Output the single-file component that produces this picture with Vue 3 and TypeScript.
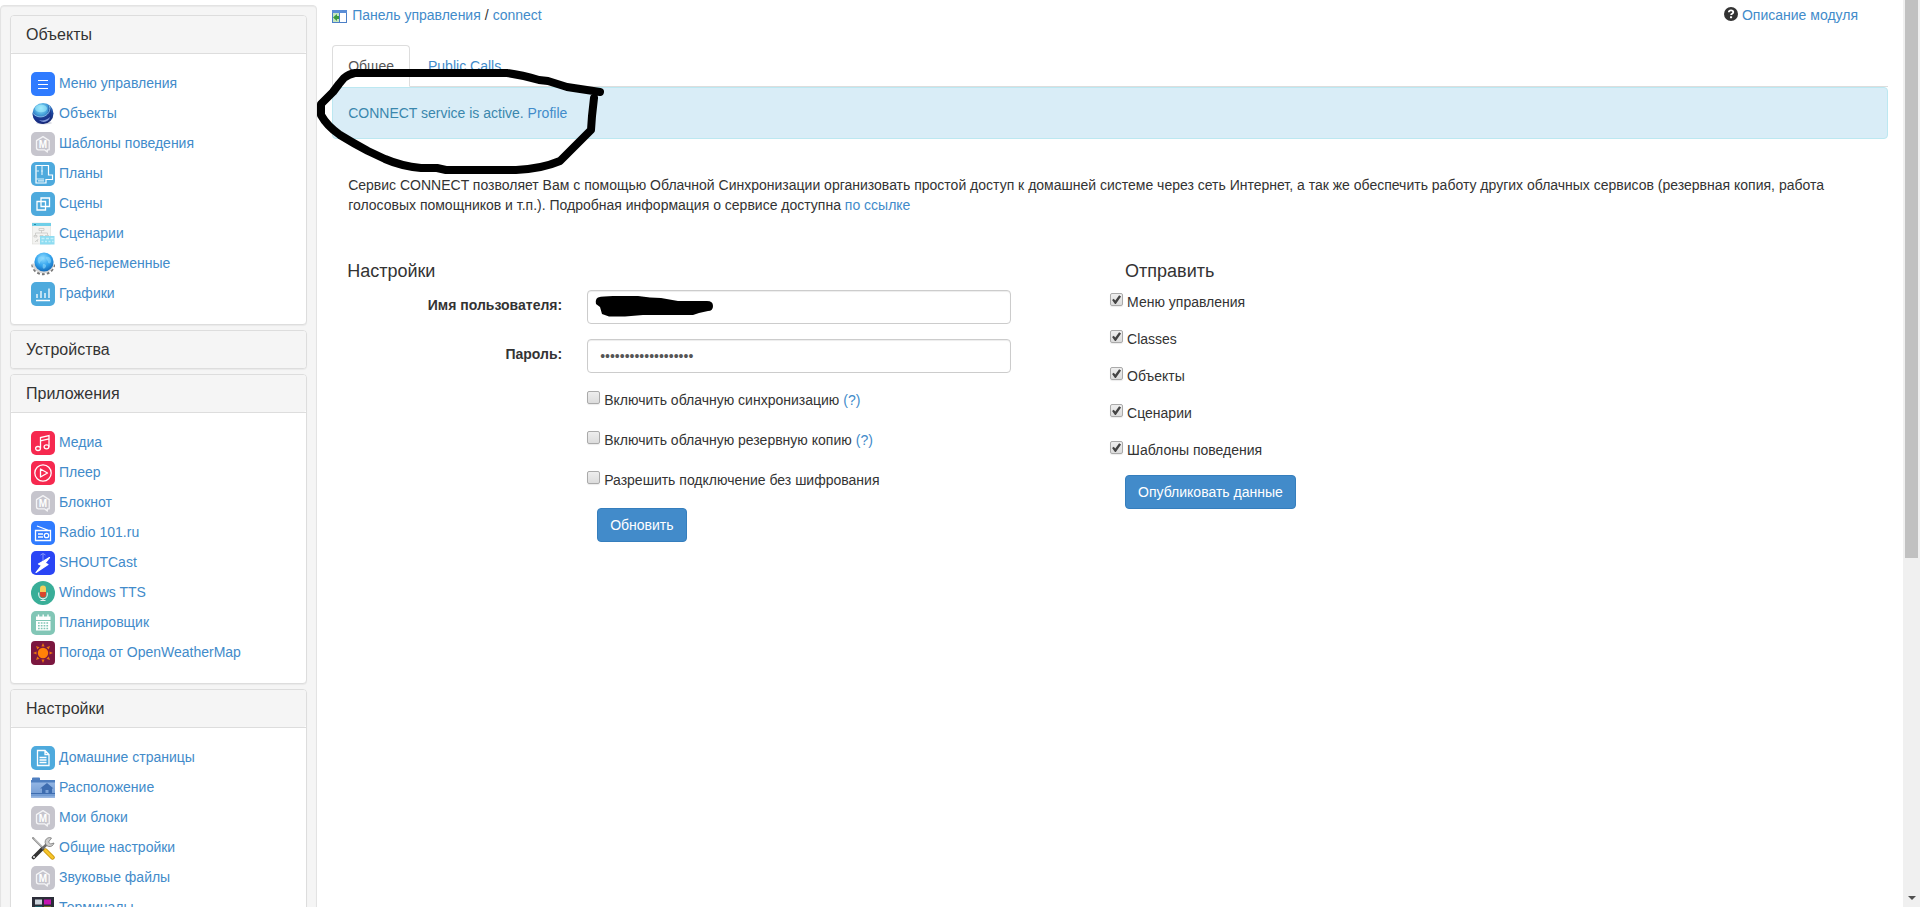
<script setup lang="ts">
import { ref } from 'vue'

interface MenuItem {
  label: string
  icon: string
}

interface MenuGroup {
  title: string
  items: MenuItem[]
}

interface Option {
  id: string
  label: string
  checked: boolean
  help?: boolean
}

const groups: MenuGroup[] = [
  {
    title: 'Объекты',
    items: [
      { label: 'Меню управления', icon: 'menu' },
      { label: 'Объекты', icon: 'sphere' },
      { label: 'Шаблоны поведения', icon: 'module' },
      { label: 'Планы', icon: 'plan' },
      { label: 'Сцены', icon: 'scenes' },
      { label: 'Сценарии', icon: 'script' },
      { label: 'Веб-переменные', icon: 'globe' },
      { label: 'Графики', icon: 'chart' },
    ],
  },
  { title: 'Устройства', items: [] },
  {
    title: 'Приложения',
    items: [
      { label: 'Медиа', icon: 'music' },
      { label: 'Плеер', icon: 'player' },
      { label: 'Блокнот', icon: 'module' },
      { label: 'Radio 101.ru', icon: 'radio' },
      { label: 'SHOUTCast', icon: 'bolt' },
      { label: 'Windows TTS', icon: 'mic' },
      { label: 'Планировщик', icon: 'calendar' },
      { label: 'Погода от OpenWeatherMap', icon: 'sun' },
    ],
  },
  {
    title: 'Настройки',
    items: [
      { label: 'Домашние страницы', icon: 'page' },
      { label: 'Расположение', icon: 'folder' },
      { label: 'Мои блоки', icon: 'module' },
      { label: 'Общие настройки', icon: 'tools' },
      { label: 'Звуковые файлы', icon: 'module' },
      { label: 'Терминалы', icon: 'terminal' },
    ],
  },
]

const username = ref('')
const password = ref('connect-password-01')

const settings = ref<Option[]>([
  { id: 'sync', label: 'Включить облачную синхронизацию', checked: false, help: true },
  { id: 'backup', label: 'Включить облачную резервную копию', checked: false, help: true },
  { id: 'plain', label: 'Разрешить подключение без шифрования', checked: false },
])

const publish = ref<Option[]>([
  { id: 'send-menu', label: 'Меню управления', checked: true },
  { id: 'send-classes', label: 'Classes', checked: true },
  { id: 'send-objects', label: 'Объекты', checked: true },
  { id: 'send-scripts', label: 'Сценарии', checked: true },
  { id: 'send-patterns', label: 'Шаблоны поведения', checked: true },
])
</script>

<template>
  <div class="app">
    <svg class="defs" aria-hidden="true">
      <defs>
        <radialGradient id="g-sphere" cx="0.4" cy="0.25" r="0.75">
          <stop offset="0" stop-color="#9be8fb" />
          <stop offset="0.4" stop-color="#4aa5dc" />
          <stop offset="0.75" stop-color="#1f4fa8" />
          <stop offset="1" stop-color="#15246b" />
        </radialGradient>
        <radialGradient id="g-globe" cx="0.45" cy="0.3" r="0.7">
          <stop offset="0" stop-color="#8fdcff" />
          <stop offset="0.55" stop-color="#35a5ee" />
          <stop offset="1" stop-color="#1169b8" />
        </radialGradient>
        <linearGradient id="g-folder" x1="0" y1="0" x2="0" y2="1">
          <stop offset="0" stop-color="#92b5e4" />
          <stop offset="1" stop-color="#6d97d0" />
        </linearGradient>
      </defs>
      <symbol id="i-menu" viewBox="0 0 24 24">
        <rect width="24" height="24" rx="5" fill="#2f7bff" />
        <path d="M7 8.500h10M7 12.500h10M7 16.500h10" stroke="#fff" stroke-width="1.200" />
      </symbol>
      <symbol id="i-sphere" viewBox="0 0 24 24">
        <ellipse cx="13" cy="21" rx="8" ry="1.500" fill="#d5d8e2" />
        <circle cx="12" cy="11.500" r="10.500" fill="url(#g-sphere)" />
        <path d="M1.500 11c3 3 7 5 11 3 4-1 6-5 5-10 3 3 4 8 2 12-3 6-10 7-14 4-2-2-4-5-4-9z" fill="#182b83" opacity="0.750" />
        <ellipse cx="10" cy="6.500" rx="6" ry="3.800" fill="#a8f0ff" opacity="0.550" />
        <path d="M1.500 11c4 5 11 5 15 1 2-2 3-5 2-8" fill="none" stroke="#8fcdf3" stroke-width="0.900" />
        <path d="M8 18c4 1 8 0 11-3-1 4-6 7-11 3z" fill="#9fb6ee" opacity="0.800" />
      </symbol>
      <symbol id="i-module" viewBox="0 0 24 24">
        <rect width="24" height="24" rx="5" fill="#c6c5cd" />
        <path d="M16.300 17.800h1.900V8.600L12 4.600 5.500 8.600v7.200q0 2 2 2h6l2.800 2.200z" fill="none" stroke="#f4f4f6" stroke-width="1.300" stroke-linejoin="round" />
        <text x="12" y="15.500" text-anchor="middle" font-family="Liberation Sans, Arial, sans-serif" font-size="10" font-weight="700" fill="#fff">M</text>
      </symbol>
      <symbol id="i-plan" viewBox="0 0 24 24">
        <rect width="24" height="24" rx="5" fill="#4eaadd" />
        <path d="M5 3.500h12.500V13h4v4.500H15V21H5z" fill="none" stroke="#fff" stroke-width="1.200" />
        <path d="M5 9h3M11 3.500V13M10 9h2M5 17h8M7 18.800h6" fill="none" stroke="#d8effa" stroke-width="1.200" />
      </symbol>
      <symbol id="i-scenes" viewBox="0 0 24 24">
        <rect width="24" height="24" rx="5" fill="#4eaadd" />
        <path d="M10 6h8.500v8.500H10zM6 9.500h8.500V18H6z" fill="none" stroke="#fff" stroke-width="1.300" />
      </symbol>
      <symbol id="i-script" viewBox="0 0 24 24">
        <rect x="1.500" y="1" width="18" height="21" fill="#f3f3f1" stroke="#dcdcd9" stroke-width="0.600" />
        <rect x="1" y="1" width="19" height="3" fill="#6fcfe8" />
        <path d="M3 2.500h2" stroke="#2789a5" stroke-width="1.200" />
        <path d="M8 6.500h5v2H8zM10.500 8.500V11M4.500 11h12M4.500 11v2M16.500 11v2M3 13.500h3v1.500H3zM9 13.500h3v1.500H9zM14 13.500h4M4 20l2-2M7 17l-1 3" fill="none" stroke="#c2c2bf" stroke-width="0.700" />
        <rect x="9" y="14" width="14.500" height="8.500" fill="#8edcf1" />
        <path d="M10.500 16.500h3M15 16.500h3M19.500 16.500h3M10.500 19.500h2M14 19.500h2M17.500 19.500h2M21 19.500h1.500" stroke="#c5effa" stroke-width="1.500" />
      </symbol>
      <symbol id="i-globe" viewBox="0 0 24 24">
        <path d="M2 12.500a10.200 9 0 0 0 20.400 0" fill="none" stroke="#777" stroke-width="3.400" stroke-dasharray="2.600 2" />
        <path d="M2.500 11.500a9.700 8.500 0 0 0 19.400 0" fill="none" stroke="#d7d7d7" stroke-width="2.500" />
        <circle cx="13" cy="10" r="9.600" fill="url(#g-globe)" />
        <path d="M7 6c3-3 6-1 5 1s-3 2-3 4-3-1-2-5zM15 5c3-1 5 1 5 4s-3 3-3 1-3-3-2-5zM12 12c3 0 4 2 2 4s-3-1-2-4z" fill="#8fd8fc" opacity="0.600" />
      </symbol>
      <symbol id="i-chart" viewBox="0 0 24 24">
        <rect width="24" height="24" rx="5" fill="#4eaadd" />
        <path d="M6 12v4M10 9v7M14 11v5M18 6.500V16M5 18.500h14" stroke="#fff" stroke-width="1.300" />
      </symbol>
      <symbol id="i-music" viewBox="0 0 24 24">
        <rect width="24" height="24" rx="5" fill="#f6294f" />
        <g fill="none" stroke="#fff" stroke-width="1.300">
          <ellipse cx="7" cy="17.500" rx="2.400" ry="2" />
          <ellipse cx="15.500" cy="15.800" rx="2.400" ry="2" />
          <path d="M9.500 17.500V6.500l8.500-2v11.300M9.500 9.800l8.500-2" />
        </g>
      </symbol>
      <symbol id="i-player" viewBox="0 0 24 24">
        <rect width="24" height="24" rx="5" fill="#f6294f" />
        <circle cx="12" cy="12" r="8.200" fill="none" stroke="#fff" stroke-width="1.300" />
        <path d="M9.500 8v8l7-4z" fill="none" stroke="#fff" stroke-width="1.300" stroke-linejoin="round" />
      </symbol>
      <symbol id="i-radio" viewBox="0 0 24 24">
        <rect width="24" height="24" rx="5" fill="#2f7bff" />
        <path d="M4.500 9.500h15v10h-15zM6 5l12 4.500M7 13h5M7 16h5" fill="none" stroke="#fff" stroke-width="1.300" />
        <circle cx="15.500" cy="14.500" r="2.200" fill="none" stroke="#fff" stroke-width="1.300" />
      </symbol>
      <symbol id="i-bolt" viewBox="0 0 24 24">
        <rect width="24" height="24" rx="5" fill="#2a45f5" />
        <path d="M18.500 6.500L7.500 13l3 1.500-5.500 7 12-8-3-1.500z" fill="#fff" stroke="#fff" stroke-width="1.200" stroke-linejoin="round" />
        <path d="M12 3v7M9.500 4q2.500-3 5 0" fill="none" stroke="#8f9ffb" stroke-width="0.900" />
      </symbol>
      <symbol id="i-mic" viewBox="0 0 24 24">
        <circle cx="12" cy="12" r="12" fill="#39ae98" />
        <path d="M9 11V7.500a3 3 0 0 1 6 0V11z" fill="#f4d05c" />
        <path d="M9 11h6v2.500a3 3 0 0 1-6 0z" fill="#d9462d" />
        <path d="M7.700 11.500v2a4.300 4.300 0 0 0 8.600 0v-2M12 17.500v2.500M9.500 19.500h5" fill="none" stroke="#e8efed" stroke-width="1.100" />
      </symbol>
      <symbol id="i-calendar" viewBox="0 0 24 24">
        <rect width="24" height="24" rx="5" fill="#82c6b6" />
        <path d="M5 5.500h14.500V9H5zM5 10h14.500v9.500H5z" fill="#fff" />
        <path d="M7.500 3.500v3M12.200 3.500v3M17 3.500v3" stroke="#fff" stroke-width="1.400" />
        <path d="M7 12h11M7 14.800h11M7 17.500h11" stroke="#82c6b6" stroke-width="1.600" stroke-dasharray="1.700 1.100" />
      </symbol>
      <symbol id="i-sun" viewBox="0 0 24 24">
        <rect width="24" height="24" rx="4" fill="#7b173f" />
        <circle cx="12" cy="12" r="5.200" fill="#ff8208" />
        <path d="M12 2l1.600 3.500h-3.200zM12 22l1.600-3.500h-3.200zM2 12l3.500-1.600v3.200zM22 12l-3.500-1.600v3.200zM5 5l3.600 1.300-2.300 2.300zM19 5l-3.600 1.300 2.300 2.300zM5 19l3.600-1.300-2.300-2.300zM19 19l-3.600-1.300 2.300-2.300z" fill="#e8740f" />
      </symbol>
      <symbol id="i-page" viewBox="0 0 24 24">
        <rect width="24" height="24" rx="5" fill="#4eaadd" />
        <path d="M6.500 4.500h7.500l4 4V19.500H6.500zM14 4.500v4h4M8.500 11.500h7M8.500 14h7M8.500 16.500h7" fill="none" stroke="#fff" stroke-width="1.300" />
      </symbol>
      <symbol id="i-folder" viewBox="0 0 24 24">
        <path d="M1 2.500q0-1 1-1h6q1 0 1 1V4H24v17.500H0V4h1z" fill="#4f7fc0" />
        <path d="M0 6.500h24v15H0z" fill="url(#g-folder)" />
        <path d="M9 12.500l7-5.500 6.500 5.500h-1.500V17h-3.500v-3h-3v3H11v-4.500z" fill="#3e6db0" />
        <path d="M0 17.500h24" stroke="#3e6db0" stroke-width="1" />
        <path d="M0 21h24" stroke="#a9c4ea" stroke-width="1" />
      </symbol>
      <symbol id="i-tools" viewBox="0 0 24 24">
        <path d="M2 2l13 13" stroke="#8d8d8d" stroke-width="2" stroke-linecap="round" />
        <path d="M3 2.500l11 11" stroke="#e5e5e5" stroke-width="0.900" />
        <path d="M14.500 14.500l7 7" stroke="#c28b00" stroke-width="4.400" stroke-linecap="round" />
        <path d="M14.500 14.500l7 7" stroke="#f6c52b" stroke-width="2.800" stroke-linecap="round" />
        <path d="M2.500 21.500L11 13" stroke="#333" stroke-width="3.600" stroke-linecap="round" />
        <path d="M11 13l5-5" stroke="#6d6d6d" stroke-width="2.600" />
        <path d="M20.500 2a4.500 4.500 0 1 0 2.500 5l-3.500 1-2-2z" fill="#cfcfcf" stroke="#777" stroke-width="0.800" />
        <circle cx="3" cy="21" r="1" fill="#eee" />
      </symbol>
      <symbol id="i-terminal" viewBox="0 0 24 24">
        <rect x="1" y="1" width="22" height="22" fill="#2b2d38" />
        <rect x="4" y="3.500" width="7" height="5" fill="#cdd4dc" />
        <rect x="13" y="3.500" width="7" height="5" fill="#c413b0" />
        <rect x="4" y="10.500" width="7" height="5" fill="#0d8f94" />
        <rect x="13" y="10.500" width="7" height="5" fill="#b9a417" />
      </symbol>
    </svg>

    <div class="viewport">
      <aside class="sidebar">
        <section v-for="group in groups" :key="group.title" class="panel">
          <h2 class="panel-title">{{ group.title }}</h2>
          <ul v-if="group.items.length" class="panel-body">
            <li v-for="item in group.items" :key="item.label">
              <a href="#" class="menu-link">
                <svg class="menu-icon" aria-hidden="true"><use :href="'#i-' + item.icon" /></svg>
                <span>{{ item.label }}</span>
              </a>
            </li>
          </ul>
        </section>
      </aside>

      <main class="main">
        <header class="topline">
          <nav class="crumbs" aria-label="Навигация">
            <svg class="crumb-icon" viewBox="0 0 16 16" aria-hidden="true">
              <rect x="0.500" y="1.500" width="14" height="12" fill="#fff" stroke="#4c7fc6" />
              <path d="M0 1h15v3H0z" fill="#5b8ed6" />
              <path d="M1 4h6v9H1z" fill="#c6e6c0" />
              <path d="M7.500 4v9" stroke="#4c7fc6" />
              <path d="M1 8.500L5 5v2h2v3H5v2z" fill="#3b9b3e" />
            </svg>
            <a href="#">Панель управления</a>
            <span>/</span>
            <a href="#">connect</a>
          </nav>
          <div class="about">
            <svg class="about-icon" viewBox="0 0 14 14" aria-hidden="true">
              <circle cx="7" cy="7" r="7" fill="#333" />
              <path d="M4.800 5.300q0-2 2.200-2t2.300 1.800q0 1.200-1.300 1.700-.9.400-.9 1.300" fill="none" stroke="#fff" stroke-width="1.800" />
              <path d="M6 9.300h2.100v1.900H6z" fill="#fff" />
            </svg>
            <a href="#">Описание модуля</a>
          </div>
        </header>

        <nav class="tabs" aria-label="Разделы модуля">
          <a href="#" class="tab active">Общее</a>
          <a href="#" class="tab">Public Calls</a>
        </nav>

        <div class="alert">CONNECT service is active. <a href="#">Profile</a></div>

        <p class="intro">
          Сервис CONNECT позволяет Вам с помощью Облачной Синхронизации организовать простой доступ к домашней
          системе через сеть Интернет, а так же обеспечить работу других облачных сервисов (резервная копия, работа
          голосовых помощников и т.п.). Подробная информация о сервисе доступна <a href="#">по ссылке</a>
        </p>

        <div class="columns">
          <form class="column" @submit.prevent>
            <h3 class="heading">Настройки</h3>
            <div class="fields">
              <label class="field-label" for="username">Имя пользователя:</label>
              <div class="field">
                <input id="username" v-model="username" class="control" type="text" />
                <svg class="redaction" viewBox="0 0 119 21" aria-hidden="true">
                  <path d="M3 1.500Q8 0 18 0H43L55 1.500 66 2 83 5H112Q118 5 118 10T113 15L104 17 98 19H78L48 19 30 20.500H14L7 18 5 11 1 8Q0 3 3 1.500z" fill="#000" />
                </svg>
              </div>
              <label class="field-label" for="password">Пароль:</label>
              <div class="field">
                <input id="password" v-model="password" class="control" type="password" autocomplete="off" />
              </div>
              <div class="options">
                <div class="option-list">
                  <div v-for="option in settings" :key="option.id" class="option">
                    <input :id="option.id" v-model="option.checked" class="check" type="checkbox" />
                    <label :for="option.id">{{ option.label }}</label>
                    <a v-if="option.help" href="#">(?)</a>
                  </div>
                </div>
                <button class="button update" type="submit">Обновить</button>
              </div>
            </div>
          </form>

          <form class="column" @submit.prevent>
            <h3 class="heading">Отправить</h3>
            <div class="publish">
              <div v-for="option in publish" :key="option.id" class="option">
                <input :id="option.id" v-model="option.checked" class="check" type="checkbox" />
                <label :for="option.id">{{ option.label }}</label>
              </div>
            </div>
            <button class="button send" type="submit">Опубликовать данные</button>
          </form>
        </div>

        <svg class="marker" viewBox="0 0 288 110" aria-hidden="true">
          <path
            d="M283 26L250 21 231 15 222 14Q205 9 190 7H38Q32 8 27 12L22 18 16 26 4 38V49Q10 60 23 69 36 77 51 85L68 93Q84 100 104 102H120L129 104H199Q224 103 243 95L250 88 258 80 274 64 275 50 277 32"
            fill="none"
            stroke="#000"
            stroke-width="8"
            stroke-linecap="round"
            stroke-linejoin="round"
          />
        </svg>
      </main>
    </div>

    <div class="scrollbar" aria-hidden="true">
      <div class="thumb"></div>
      <svg class="arrow" viewBox="0 0 8 4"><path d="M0 0h8L4 4z" fill="#505050" /></svg>
    </div>
  </div>
</template>

<style>
html,
body {
  height: 100%;
  overflow: hidden;
  background: #fff;
}
</style>

<style scoped>
.app {
  display: flex;
  height: 100vh;
  color: #333;
  font-family: "Liberation Sans", Arial, Helvetica, sans-serif;
  font-size: 14px;
  line-height: 20px;
}

.app *,
.app *::before {
  box-sizing: border-box;
}

.defs {
  position: absolute;
  width: 0;
  height: 0;
}

a {
  color: #428bca;
  text-decoration: none;
}

a:hover {
  text-decoration: underline;
}

.viewport {
  flex: 1;
  min-width: 0;
  display: flex;
  align-items: flex-start;
  padding-top: 5px;
  overflow-y: auto;
  scrollbar-width: none;
}

.sidebar {
  flex: none;
  width: calc(100% / 6);
  display: flex;
  flex-direction: column;
  gap: 5px;
  padding: 9px;
  border: 1px solid #e3e3e3;
  border-radius: 4px;
  background: #f5f5f5;
  box-shadow: inset 0 1px 1px rgba(0, 0, 0, 0.05);
}

.panel {
  border: 1px solid #ddd;
  border-radius: 4px;
  background: #fff;
  box-shadow: 0 1px 1px rgba(0, 0, 0, 0.05);
}

.panel-title {
  margin: 0;
  padding: 10px 15px;
  border-radius: 3px;
  background: #f5f5f5;
  font-size: 16px;
  font-weight: 400;
  line-height: 17px;
}

.panel-body {
  margin: 0;
  padding: 15px 20px;
  border-top: 1px solid #ddd;
  list-style: none;
}

.menu-link {
  display: flex;
  align-items: center;
  gap: 4px;
  height: 30px;
}

.menu-link span {
  padding-bottom: 2px;
}

.menu-icon {
  flex: none;
  width: 24px;
  height: 24px;
}

.main {
  position: relative;
  flex: 1;
  min-width: 0;
  padding: 0 15px;
}

.topline {
  display: flex;
  justify-content: space-between;
  margin-bottom: 20px;
  padding-right: 30px;
}

.crumbs,
.about {
  display: flex;
  gap: 4px;
}

.crumb-icon {
  width: 16px;
  height: 16px;
  margin-top: 4px;
}

.about-icon {
  width: 14px;
  height: 14px;
  margin-top: 2px;
}

.tabs {
  display: flex;
  gap: 2px;
  border-bottom: 1px solid #ddd;
}

.tab {
  margin-bottom: -1px;
  padding: 10px 15px;
  border: 1px solid transparent;
  border-radius: 4px 4px 0 0;
}

.tab.active {
  border-color: #ddd #ddd #fff;
  background: #fff;
  color: #555;
}

.alert {
  padding: 15px;
  border: 1px solid #bce8f1;
  border-radius: 4px;
  background: #d9edf7;
  color: #3a87ad;
}

.intro {
  margin: 36px 0 46px;
  padding: 0 16px;
}

.columns {
  display: grid;
  grid-template-columns: 1fr 1fr;
}

.heading {
  margin: 0;
  padding-left: 15px;
  font-size: 18px;
  font-weight: 500;
  line-height: 20px;
}

.fields {
  display: grid;
  grid-template-columns: 230px 1fr;
  column-gap: 25px;
  row-gap: 15px;
  margin-top: 9px;
  padding-right: 99px;
}

.field-label {
  padding-top: 5px;
  font-weight: 700;
  text-align: right;
}

.field {
  position: relative;
}

.control {
  display: block;
  width: 100%;
  height: 34px;
  padding: 6px 12px;
  border: 1px solid #ccc;
  border-radius: 4px;
  background: #fff;
  box-shadow: inset 0 1px 1px rgba(0, 0, 0, 0.075);
  color: #555;
  font: inherit;
}

.redaction {
  position: absolute;
  top: 6px;
  left: 8px;
  width: 119px;
  height: 21px;
  pointer-events: none;
}

.options {
  grid-column: 2;
  padding-top: 2px;
}

.option-list {
  display: flex;
  flex-direction: column;
  gap: 20px;
  margin-bottom: 18px;
}

.option {
  display: flex;
  gap: 4px;
}

.check {
  position: relative;
  flex: none;
  width: 13px;
  height: 13px;
  margin: 1px 0 0;
  border: 1px solid #aaa;
  border-radius: 2px;
  background: linear-gradient(#eee, #dcdcdc);
  box-shadow: 0 1px 1px rgba(0, 0, 0, 0.08);
  appearance: none;
}

.check:checked::before {
  content: "";
  position: absolute;
  inset: 1px;
  background: #444;
  clip-path: polygon(0 55%, 18% 42%, 36% 62%, 78% 4%, 100% 16%, 42% 100%, 32% 100%);
}

.button {
  display: block;
  height: 34px;
  padding: 6px 12px;
  border: 1px solid #357ebd;
  border-radius: 4px;
  background: #428bca;
  color: #fff;
  font: inherit;
  cursor: pointer;
}

.update {
  margin-left: 10px;
}

.publish {
  display: flex;
  flex-direction: column;
  gap: 17px;
  margin: 11px 0 15px;
}

.send {
  margin-left: 15px;
}

.marker {
  position: absolute;
  top: 61px;
  left: 0;
  width: 288px;
  height: 110px;
  pointer-events: none;
}

.scrollbar {
  flex: none;
  display: flex;
  flex-direction: column;
  align-items: center;
  justify-content: space-between;
  width: 17px;
  padding: 0 2px 7px;
  background: #f0f0f0;
}

.thumb {
  width: 13px;
  height: 62%;
  background: #c1c1c1;
}

.arrow {
  width: 8px;
  height: 4px;
}
</style>
